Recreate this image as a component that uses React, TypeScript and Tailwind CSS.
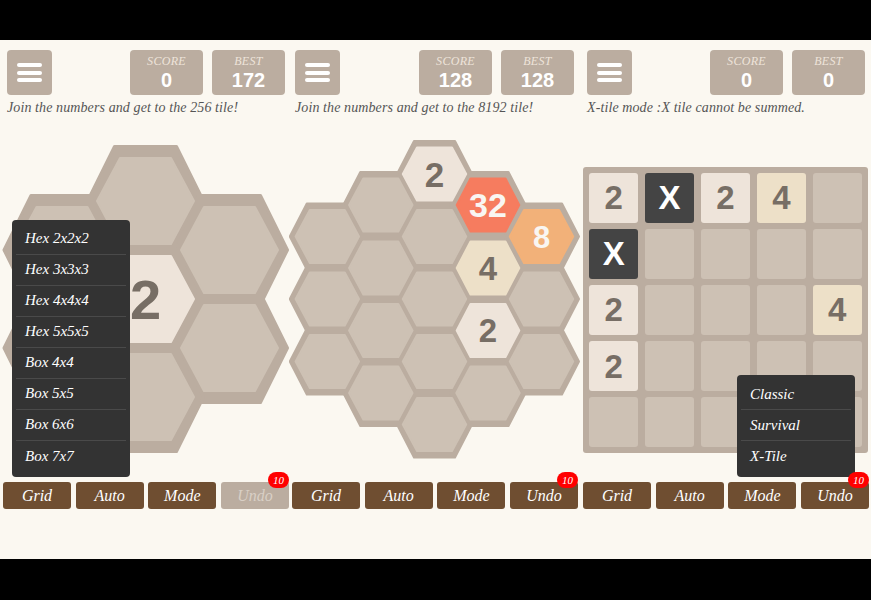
const hand = "font-['Liberation_Serif',serif] italic";
const num = "font-['Liberation_Sans',Arial,sans-serif] font-bold";

type Tile = { x: number; y: number; label?: string; fill?: string; color?: string; size?: number; hw?: number };

function hexPoints(x: number, y: number, hw: number, hh: number, flat: number) {
  return [
    [x - flat, y - hh],
    [x + flat, y - hh],
    [x + hw, y],
    [x + flat, y + hh],
    [x - flat, y + hh],
    [x - hw, y],
  ]
    .map((p) => p.join(","))
    .join(" ");
}

function HexBoard({
  viewBox,
  width,
  tiles,
  outer,
  inner,
  round,
}: {
  viewBox: string;
  width: number;
  tiles: Tile[];
  outer: [number, number, number];
  inner: [number, number, number];
  round: number;
}) {
  return (
    <svg viewBox={viewBox} width={width} height={350} className="block">
      {tiles.map((t, i) => (
        <polygon
          key={i}
          points={hexPoints(t.x, t.y, outer[0], outer[1], outer[2])}
          fill="#bbada0"
          stroke="#bbada0"
          strokeWidth={round}
          strokeLinejoin="round"
        />
      ))}
      {tiles.map((t, i) => {
        const fill = t.fill ?? "#cdc1b4";
        return (
          <g key={i}>
            <polygon
              points={hexPoints(t.x, t.y, t.hw ?? inner[0], inner[1], inner[2])}
              fill={fill}
              stroke={fill}
              strokeWidth={2}
              strokeLinejoin="round"
            />
            {t.label && (
              <text
                x={t.x}
                y={t.y + (t.size ?? 34) * 0.36}
                textAnchor="middle"
                fontSize={t.size ?? 34}
                fill={t.color ?? "#776e65"}
                className={num}
              >
                {t.label}
              </text>
            )}
          </g>
        );
      })}
    </svg>
  );
}

function Stat({ label, value }: { label: string; value: string }) {
  return (
    <div className="flex h-[45px] w-[73px] flex-col items-center rounded-[4px] bg-[#bbada0] pt-[3px]">
      <span className={`${hand} text-[12px] leading-[16px] tracking-[0.3px] text-[#eee4da]`}>{label}</span>
      <span className={`${num} text-[20px] leading-[23px] text-white`}>{value}</span>
    </div>
  );
}

function Header({ left, message, score, best }: { left: number; message: string; score: string; best: string }) {
  return (
    <div className="pt-[10px]">
      <div className="flex items-start">
        <div
          style={{ marginLeft: left }}
          className="flex h-[45px] w-[45px] flex-col items-center justify-center gap-[3.5px] rounded-[4px] bg-[#bbada0]"
        >
          <div className="h-[4px] w-[25px] rounded-full bg-white" />
          <div className="h-[4px] w-[25px] rounded-full bg-white" />
          <div className="h-[4px] w-[25px] rounded-full bg-white" />
        </div>
        <div className="flex gap-[9px]" style={{ marginLeft: 130 - left - 45 }}>
          <Stat label="SCORE" value={score} />
          <Stat label="BEST" value={best} />
        </div>
      </div>
      <p
        style={{ marginLeft: left }}
        className={`${hand} mt-[4px] h-[20px] text-[14px] leading-[18px] tracking-[0.1px] whitespace-nowrap text-[#555]`}
      >
        {message}
      </p>
    </div>
  );
}

function Footer({ undoDisabled }: { undoDisabled?: boolean }) {
  const base = `${hand} flex h-[27px] w-[68px] items-center justify-center rounded-[3px] text-[16px] leading-none`;
  return (
    <div className="mt-[7px] flex gap-[4.7px] pl-[3px]">
      {["Grid", "Auto", "Mode"].map((b) => (
        <div key={b} className={`${base} bg-[#6f4e31] text-white`}>
          {b}
        </div>
      ))}
      <div className={`${base} relative ${undoDisabled ? "bg-[#bbada0] text-[#d9d0c6]" : "bg-[#6f4e31] text-white"}`}>
        Undo
        <span className={`${hand} absolute top-[-10px] right-0 flex h-[16px] w-[21px] items-center justify-center rounded-full bg-[#f00] text-[11px] text-white`}>
          10
        </span>
      </div>
    </div>
  );
}

function Menu({ items, className }: { items: string[]; className: string }) {
  return (
    <div className={`absolute w-[118px] rounded-[4px] bg-[#333] px-[4px] pt-[4px] pb-[5px] ${className}`}>
      {items.map((item, i) => (
        <div
          key={item}
          className={`${hand} flex h-[31px] items-center pl-[9px] text-[15px] text-white ${
            i < items.length - 1 ? "border-b border-[#4a4a4a]" : ""
          }`}
        >
          {item}
        </div>
      ))}
    </div>
  );
}

const bigTiles: Tile[] = [
  { x: 145.5, y: 201 },
  { x: 62, y: 250 },
  { x: 229.5, y: 250 },
  { x: 145.5, y: 299, label: "2", fill: "#eee4da", size: 56 },
  { x: 62, y: 348 },
  { x: 229.5, y: 348 },
  { x: 145.5, y: 397 },
];

const smallTiles: Tile[] = [
  { x: 327.3, y: 236.5 },
  { x: 327.3, y: 299 },
  { x: 327.3, y: 361.5 },
  { x: 380.8, y: 205 },
  { x: 380.8, y: 268 },
  { x: 380.8, y: 330.5 },
  { x: 380.8, y: 393 },
  { x: 434.5, y: 174, label: "2", fill: "#eee4da", size: 35 },
  { x: 434.5, y: 236.5 },
  { x: 434.5, y: 299 },
  { x: 434.5, y: 361.5 },
  { x: 434.5, y: 424.5 },
  { x: 488, y: 205, label: "32", fill: "#f67c5f", color: "#f9f6f2", size: 34, hw: 31.3 },
  { x: 488, y: 268, label: "4", fill: "#ede0c8", size: 33, hw: 31.3 },
  { x: 488, y: 330.5, label: "2", fill: "#eee4da", size: 33, hw: 31.3 },
  { x: 488, y: 393 },
  { x: 541.5, y: 236.5, label: "8", fill: "#f2b179", color: "#f9f6f2", size: 31, hw: 31.7 },
  { x: 541.5, y: 299 },
  { x: 541.5, y: 361.5 },
];

const gridCells = [
  "2", "X", "2", "4", "",
  "X", "", "", "", "",
  "2", "", "", "", "4",
  "2", "", "", "", "",
  "", "", "", "", "",
];

function Cell({ value }: { value: string }) {
  const tone =
    value === "X"
      ? "bg-[#444] text-white"
      : value === "2"
        ? "bg-[#eee4da] text-[#776e65]"
        : value === "4"
          ? "bg-[#ede0c8] text-[#776e65]"
          : "bg-[#cdc1b4]";
  return (
    <div className={`${num} flex h-[49.5px] items-center justify-center rounded-[3px] text-[33px] leading-none ${tone}`}>
      {value}
    </div>
  );
}

export default function App() {
  return (
    <div className="flex h-[600px] w-[871px] flex-col overflow-hidden bg-black">
      <div className="mt-[40px] grid h-[519px] grid-cols-[289px_291px_291px] bg-[#fbf8f1]">
        <section className="relative flex flex-col">
          <Header left={7} message="Join the numbers and get to the 256 tile!" score="0" best="172" />
          <div className="mt-[6px] h-[350px]">
            <HexBoard
              viewBox="0 125 289 350"
              width={289}
              tiles={bigTiles}
              outer={[58, 54.5, 31]}
              inner={[48.5, 43, 25.5]}
              round={3}
            />
          </div>
          <Menu
            className="top-[179.5px] left-[12px]"
            items={["Hex 2x2x2", "Hex 3x3x3", "Hex 4x4x4", "Hex 5x5x5", "Box 4x4", "Box 5x5", "Box 6x6", "Box 7x7"]}
          />
          <Footer undoDisabled />
        </section>
        <section className="flex flex-col">
          <Header left={6} message="Join the numbers and get to the 8192 tile!" score="128" best="128" />
          <div className="mt-[6px] h-[350px]">
            <HexBoard
              viewBox="289 125 291 350"
              width={291}
              tiles={smallTiles}
              outer={[37.5, 33, 20.5]}
              inner={[31.7, 26.5, 17.5]}
              round={2}
            />
          </div>
          <Footer />
        </section>
        <section className="relative flex flex-col">
          <Header left={7} message="X-tile mode :X tile cannot be summed." score="0" best="0" />
          <div className="mt-[6px] h-[350px] pt-[42px] pl-[3px]">
            <div className="grid h-[286px] w-[285px] grid-cols-5 gap-[6.5px] rounded-[3px] bg-[#bbada0] p-[6px]">
              {gridCells.map((value, i) => (
                <Cell key={i} value={value} />
              ))}
            </div>
          </div>
          <Menu className="top-[335px] left-[157px]" items={["Classic", "Survival", "X-Tile"]} />
          <Footer />
        </section>
      </div>
    </div>
  );
}
